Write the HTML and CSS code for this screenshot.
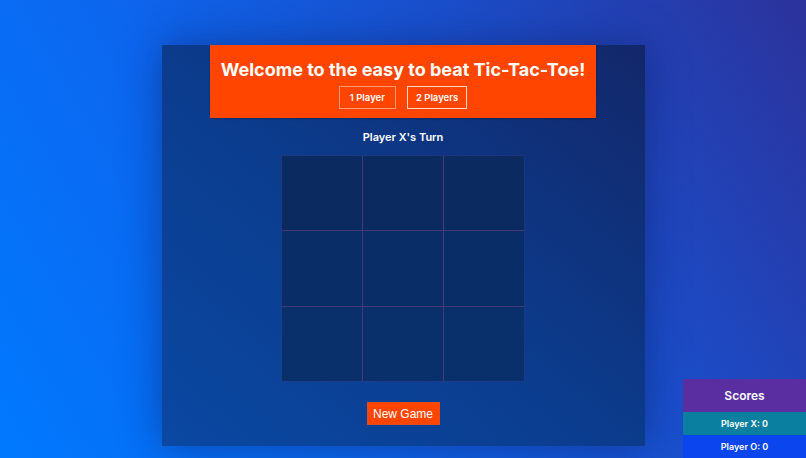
FILE: index.html
```html
<!DOCTYPE html>
<html>
<head>
<meta charset="utf-8">
<link rel="stylesheet" href="styles.css">
</head>
<body>
<main class="game">
  <header class="banner">
    <h1 class="title">Welcome to the easy to beat Tic-Tac-Toe!</h1>
    <div class="modes">
      <button class="mode">1 Player</button>
      <button class="mode active">2 Players</button>
    </div>
  </header>
  <p class="turn">Player X's Turn</p>
  <div class="board">
    <div class="cell"></div><div class="cell"></div><div class="cell"></div>
    <div class="cell"></div><div class="cell"></div><div class="cell"></div>
    <div class="cell"></div><div class="cell"></div><div class="cell"></div>
  </div>
  <button class="new-game">New Game</button>
</main>
<aside class="scores">
  <div class="scores-title">Scores</div>
  <div class="score score-x">Player X: 0</div>
  <div class="score score-o">Player O: 0</div>
</aside>
</body>
</html>
```

FILE: styles.css
```css
html, body {
  margin: 0;
  height: 100%;
}
body {
  background: linear-gradient(60deg, #0079ff 0%, #0d66ee 35%, #1a4fcc 65%, #2c329b 100%);
  font-family: "Inter", "Noto Sans", sans-serif;
  color: #fff;
  overflow: hidden;
  padding-top: 45px;
  box-sizing: border-box;
}
.game {
  width: 483px;
  height: 401px;
  margin: 0 auto;
  background: linear-gradient(to bottom left, #13276a 0%, #0b3d8f 55%, #0a48a2 100%);
  box-shadow: 0 0 40px rgba(10, 20, 80, 0.45);
  display: flex;
  flex-direction: column;
  align-items: center;
  box-sizing: border-box;
}
.banner {
  width: 386px;
  height: 73px;
  background: #ff4500;
  display: flex;
  flex-direction: column;
  align-items: center;
  box-sizing: border-box;
  padding-top: 14px;
  box-shadow: 0 1px 2px rgba(0,0,0,0.25);
}
.title {
  margin: 0;
  font-size: 18px;
  font-weight: 700;
  line-height: 22px;
  letter-spacing: 0;
}
.modes {
  display: flex;
  gap: 11px;
  margin-top: 5px;
}
.mode {
  font-family: inherit;
  font-size: 9.5px;
  font-weight: 600;
  color: #fff;
  background: transparent;
  border: 1px solid #ff9a73;
  height: 23px;
  padding: 0 10px;
  cursor: pointer;
}
.mode.active {
  border: 1.5px solid #ffd6c4;
  padding: 0 8px;
}
.turn {
  margin: 12px 0 0;
  font-size: 11px;
  font-weight: 600;
  line-height: 15px;
}
.board {
  margin-top: 11px;
  display: grid;
  grid-template-columns: 80px 80px 80px;
  grid-template-rows: 74px 75px 74px;
  gap: 1px;
  background: #45397a;
  box-shadow: 0 0 0 1px rgba(60, 55, 120, 0.35);
}
.cell {
  background: #0a2a60;
}
.cell:nth-child(n+4) { background: #092d66; }
.cell:nth-child(n+7) { background: #09306b; }
.new-game {
  margin-top: 21px;
  width: 73px;
  height: 23px;
  background: #ff4500;
  color: #fff;
  border: 1px solid #e44c1a;
  font-family: "Liberation Sans", Arial, sans-serif;
  font-size: 12px;
  cursor: pointer;
  padding: 0;
}
.scores {
  position: fixed;
  right: 0;
  bottom: 0;
  width: 123px;
  font-weight: 600;
  text-align: center;
}
.scores-title {
  background: #5a2ea1;
  height: 33px;
  line-height: 33px;
  font-size: 12px;
}
.score {
  height: 23px;
  line-height: 23px;
  font-size: 9px;
}
.score-x { background: #0a7f9f; }
.score-o { background: #0a45ee; }
```
